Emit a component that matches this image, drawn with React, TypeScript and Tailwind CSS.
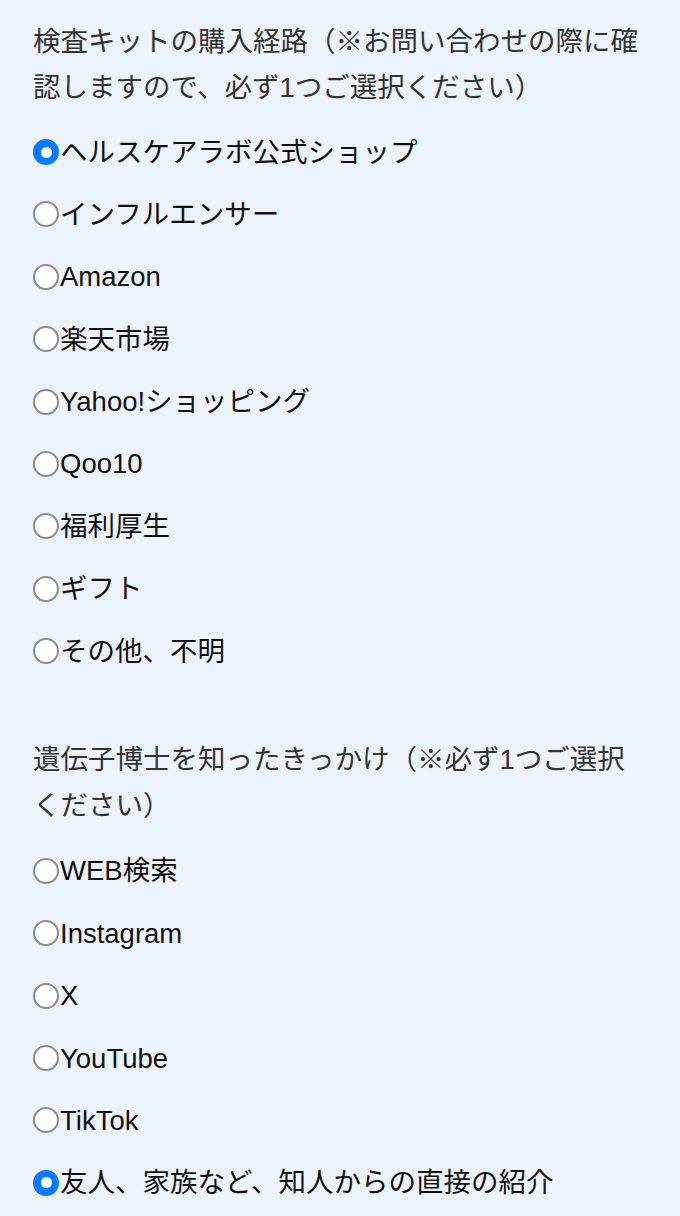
type Section = {
  title: string;
  options: string[];
  selected: number;
};

const sections: Section[] = [
  {
    title: "検査キットの購入経路（※お問い合わせの際に確認しますので、必ず1つご選択ください）",
    options: [
      "ヘルスケアラボ公式ショップ",
      "インフルエンサー",
      "Amazon",
      "楽天市場",
      "Yahoo!ショッピング",
      "Qoo10",
      "福利厚生",
      "ギフト",
      "その他、不明",
    ],
    selected: 0,
  },
  {
    title: "遺伝子博士を知ったきっかけ（※必ず1つご選択ください）",
    options: [
      "WEB検索",
      "Instagram",
      "X",
      "YouTube",
      "TikTok",
      "友人、家族など、知人からの直接の紹介",
    ],
    selected: 5,
  },
];

function Radio({ checked }: { checked: boolean }) {
  return checked ? (
    <span className="flex h-[26px] w-[26px] shrink-0 items-center justify-center rounded-full bg-[#0a7bff]">
      <span className="h-[11px] w-[11px] rounded-full bg-white" />
    </span>
  ) : (
    <span className="h-[26px] w-[26px] shrink-0 rounded-full border-[2.5px] border-[#8c8c8c] bg-white" />
  );
}

export default function App() {
  return (
    <div
      className="min-h-[1216px] w-full bg-[#edf3fa] pl-[33px] pr-[40px] pt-[18.5px]"
      style={{ fontFamily: '"Liberation Sans", "Noto Sans CJK JP", sans-serif' }}
    >
      <div className="flex flex-col gap-[63.8px]">
        {sections.map((section) => (
          <fieldset key={section.title}>
            <legend className="text-[27.5px] leading-[46px] text-[#333333]">
              {section.title}
            </legend>
            <div className="mt-[19px] flex flex-col gap-[17.4px]">
              {section.options.map((opt, i) => (
                <label
                  key={opt}
                  className="flex h-[45px] items-center text-[27.5px] leading-[45px] text-[#111111]"
                >
                  <Radio checked={i === section.selected} />
                  <span className="ml-[1px]">{opt}</span>
                </label>
              ))}
            </div>
          </fieldset>
        ))}
      </div>
    </div>
  );
}
